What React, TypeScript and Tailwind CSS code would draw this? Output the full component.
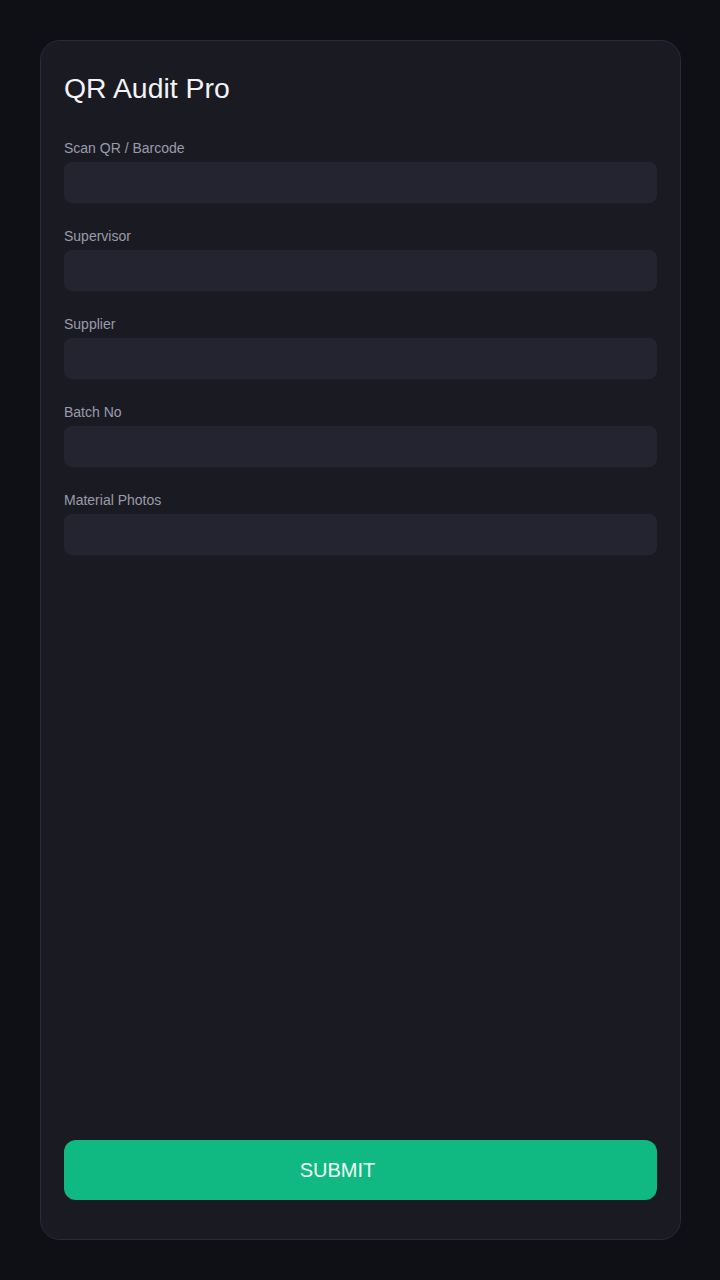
import React from "react";

const fields = ["Scan QR / Barcode", "Supervisor", "Supplier", "Batch No", "Material Photos"];

export default function App() {
  return (
    <div className="min-h-[1280px] w-full bg-[#0f1015] py-10 pl-10" style={{ fontFamily: '"Liberation Sans", Arial, sans-serif' }}>
      <div className="flex h-[1200px] w-[641px] flex-col rounded-[20px] border border-[#2b2b38] bg-[#1a1a23] px-[23px] pt-[31px] pb-[39px]">
        <h1 className="text-[28.4px] leading-[32px] font-normal text-[#f3f3f7]">QR Audit Pro</h1>
        <div className="mt-[34px] flex flex-col gap-[23px]">
          {fields.map((f) => (
            <div key={f} className="flex flex-col">
              <label className="mb-1 text-[14px] leading-[20px] text-[#9a9aab]">{f}</label>
              <div className="h-[41px] rounded-lg bg-[#242431]" />
            </div>
          ))}
        </div>
        <div className="flex-1" />
        <button className="h-[60px] w-full rounded-xl bg-[#10b981] pr-[46px] text-[20px] text-[#f0fdf8]">SUBMIT</button>
      </div>
    </div>
  );
}
